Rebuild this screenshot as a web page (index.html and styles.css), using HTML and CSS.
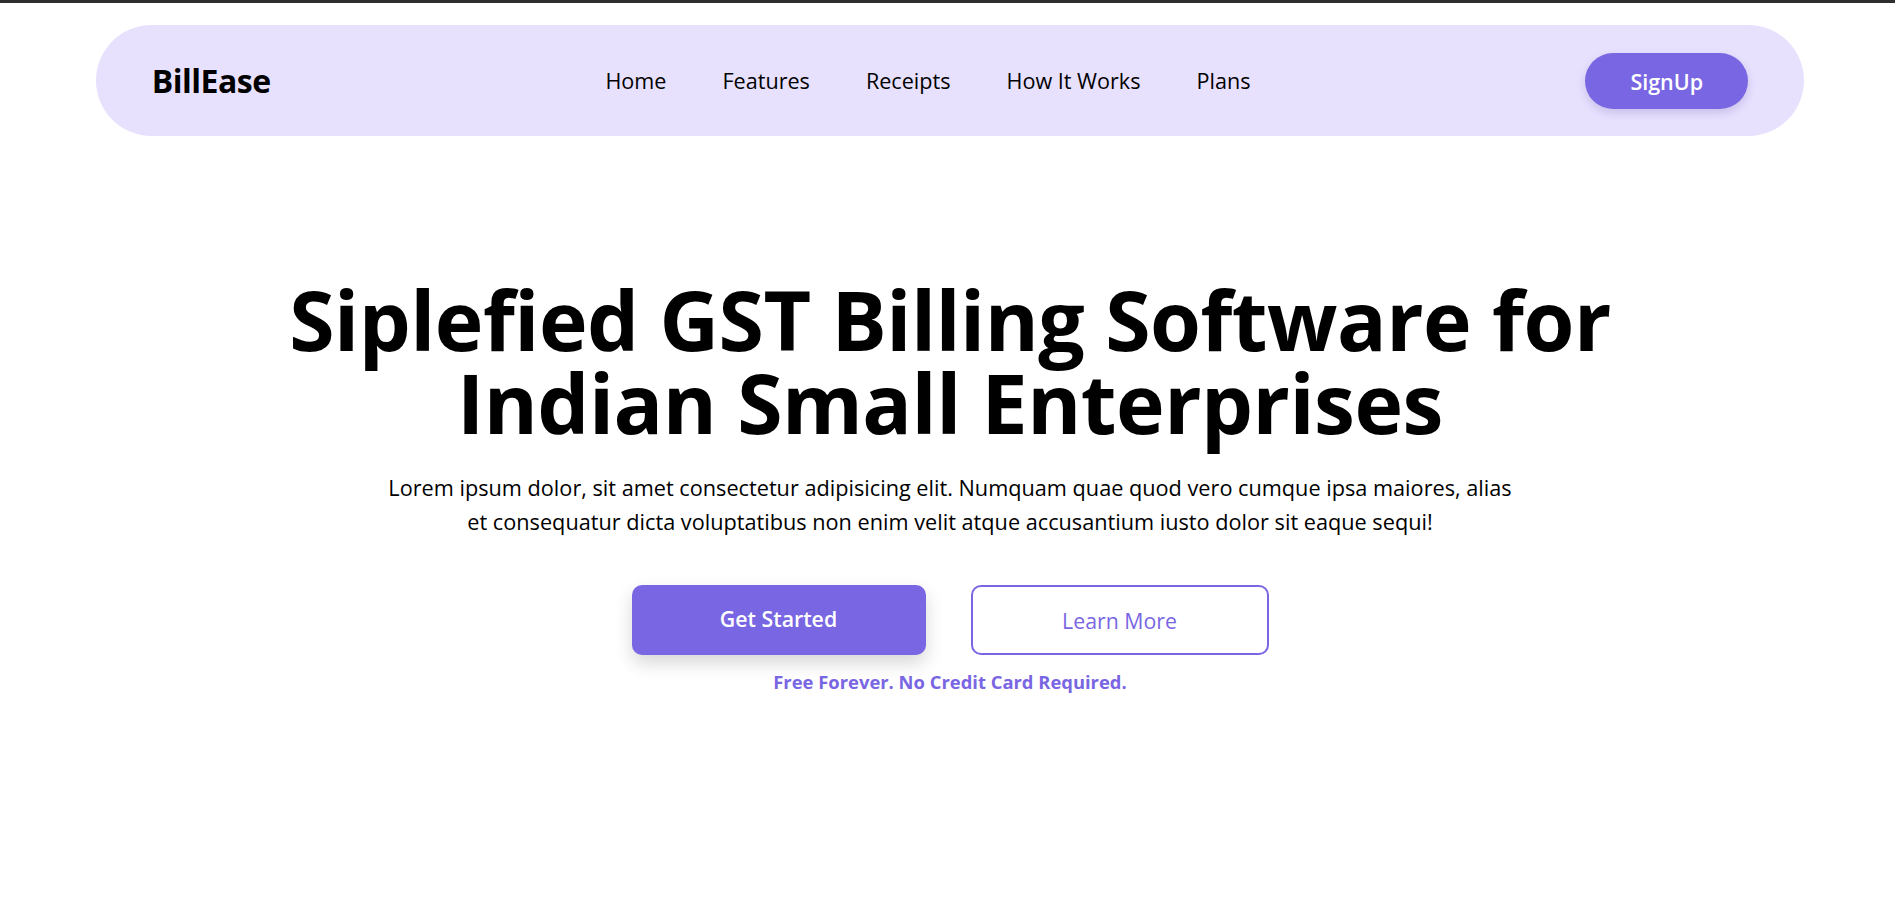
FILE: index.html
```html
<!DOCTYPE html>
<html lang="en">
<head>
<meta charset="utf-8">
<title>BillEase</title>
<link rel="stylesheet" href="styles.css">
</head>
<body>
<header class="navbar">
  <div class="logo">BillEase</div>
  <nav class="nav-links">
    <a href="#">Home</a>
    <a href="#">Features</a>
    <a href="#">Receipts</a>
    <a href="#">How It Works</a>
    <a href="#">Plans</a>
  </nav>
  <a class="signup" href="#">SignUp</a>
</header>
<main class="hero">
  <h1 class="hero-title">Siplefied GST Billing Software for<br>Indian Small Enterprises</h1>
  <p class="hero-text">Lorem ipsum dolor, sit amet consectetur adipisicing elit. Numquam quae quod vero cumque ipsa maiores, alias et consequatur dicta voluptatibus non enim velit atque accusantium iusto dolor sit eaque sequi!</p>
  <div class="hero-actions">
    <a class="btn btn-primary" href="#">Get Started</a>
    <a class="btn btn-outline" href="#">Learn More</a>
  </div>
  <p class="hero-note">Free Forever. No Credit Card Required.</p>
</main>
</body>
</html>
```
FILE: styles.css
```css
* { box-sizing: border-box; }
html, body { margin: 0; padding: 0; }
body {
  font-family: "Open Sans", "Noto Sans", sans-serif;
  color: #000;
  background: #fff;
  border-top: 3px solid #2e2e2e;
  padding-left: 5px;
}
a { text-decoration: none; color: inherit; }

.navbar {
  width: 90.4%;
  height: 111px;
  margin: 22px auto 0;
  padding: 0 56px;
  background: #e8e1fe;
  border-radius: 999px;
  display: flex;
  align-items: center;
  justify-content: space-between;
}
.logo {
  font-size: 32px;
  font-weight: 700;
  letter-spacing: -0.5px;
}
.nav-links {
  display: flex;
  gap: 56px;
}
.nav-links a {
  font-size: 21.6px;
  font-weight: 500;
}
.signup {
  width: 163px;
  height: 56px;
  margin-top: 1px;
  display: flex;
  align-items: center;
  justify-content: center;
  background: #7966e3;
  color: #fff;
  font-size: 21.5px;
  font-weight: 600;
  border-radius: 999px;
  box-shadow: 0 4px 10px rgba(60, 40, 140, 0.18);
}

.hero {
  text-align: center;
  padding-top: 142px;
}
.hero-title {
  margin: 0;
  font-size: 82.3px;
  font-weight: 700;
  line-height: 83px;
  letter-spacing: -0.5px;
}
.hero-text {
  margin: 27px auto 0;
  max-width: 1136px;
  font-size: 21.7px;
  font-weight: 500;
  line-height: 34px;
}
.hero-actions {
  margin-top: 46px;
  display: flex;
  justify-content: center;
  gap: 45px;
}
.btn {
  height: 70px;
  display: flex;
  align-items: center;
  justify-content: center;
  font-size: 21.3px;
  border-radius: 10px;
}
.btn-primary {
  width: 294px;
  background: #7966e3;
  color: #fff;
  font-weight: 600;
  padding-bottom: 4px;
  box-shadow: 0 8px 18px rgba(0, 0, 0, 0.16);
}
.btn-outline {
  width: 298px;
  background: #fff;
  color: #7966e3;
  font-weight: 500;
  border: 2px solid #7966e3;
}
.hero-note {
  margin: 14px 0 0;
  font-size: 18.4px;
  font-weight: 700;
  color: #7966e3;
}
```
